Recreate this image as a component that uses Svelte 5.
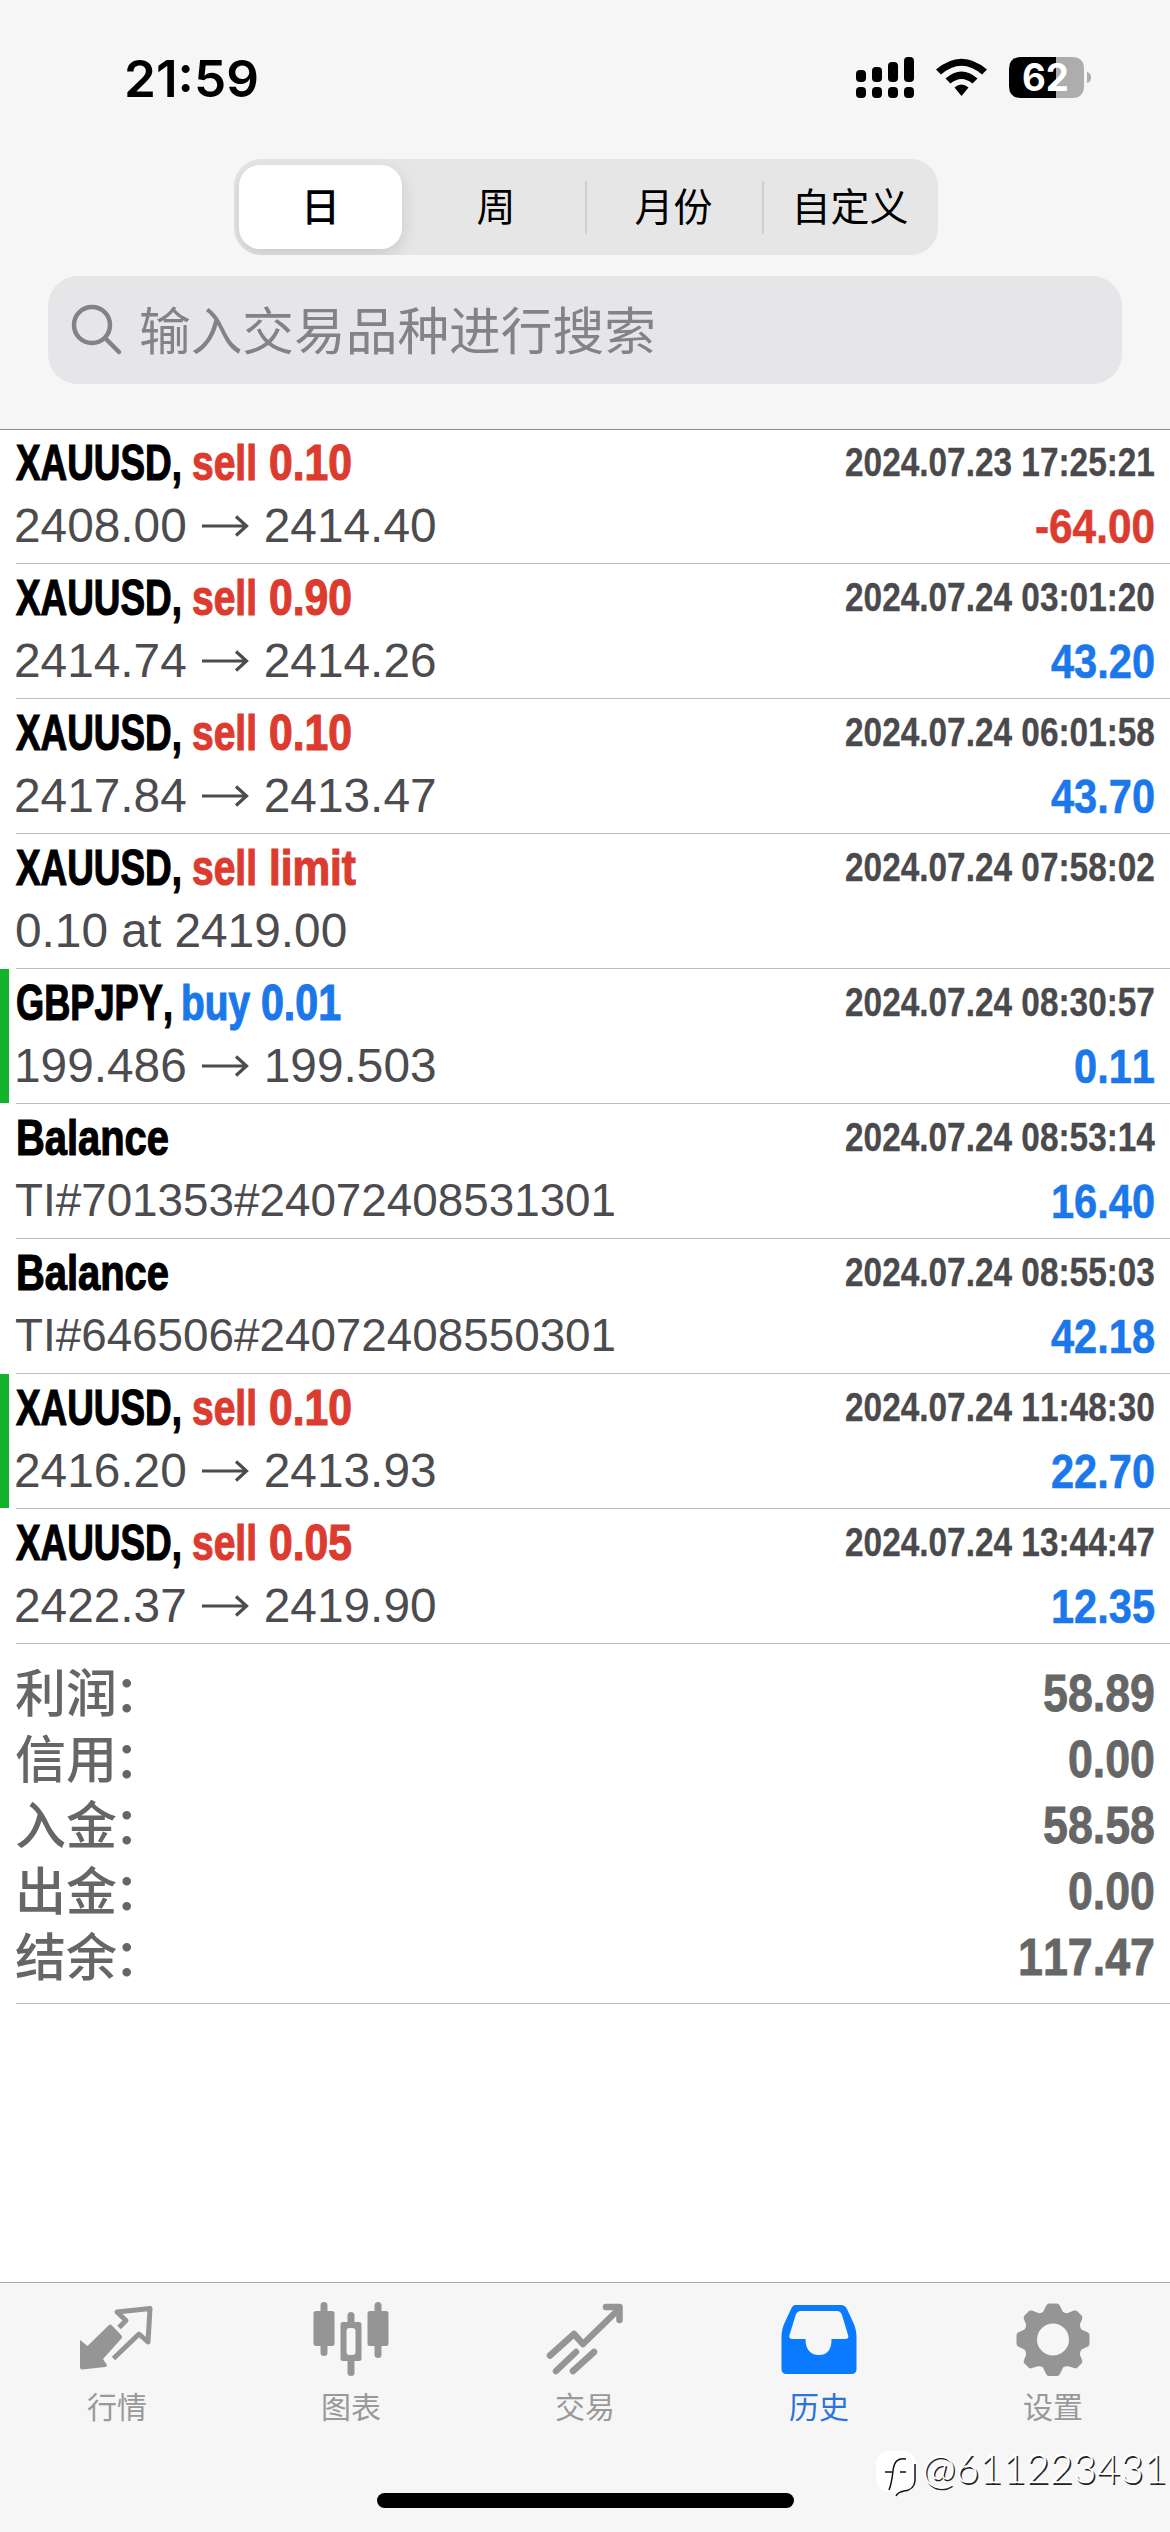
<script>
  const deals = [
    { sym: ['XAUUSD,', 166], side: ['sell', 65, 192], vol: ['0.10', 83, 269], kind: 'red', date: '2024.07.23 17:25:21', from: '2408.00', to: '2414.40', value: '-64.00', vw: 120 },
    { sym: ['XAUUSD,', 166], side: ['sell', 65, 192], vol: ['0.90', 83, 269], kind: 'red', date: '2024.07.24 03:01:20', from: '2414.74', to: '2414.26', value: '43.20', vw: 104 },
    { sym: ['XAUUSD,', 166], side: ['sell', 65, 192], vol: ['0.10', 83, 269], kind: 'red', date: '2024.07.24 06:01:58', from: '2417.84', to: '2413.47', value: '43.70', vw: 104 },
    { sym: ['XAUUSD,', 166], side: ['sell', 65, 192], vol: ['limit', 87, 269], kind: 'red', date: '2024.07.24 07:58:02', note: '0.10 at 2419.00' },
    { sym: ['GBPJPY,', 157], side: ['buy', 69, 181], vol: ['0.01', 80, 261], kind: 'blue', date: '2024.07.24 08:30:57', from: '199.486', to: '199.503', value: '0.11', vw: 81, mark: true },
    { sym: ['Balance', 153], date: '2024.07.24 08:53:14', note: 'TI#701353#24072408531301', value: '16.40', vw: 104 },
    { sym: ['Balance', 153], date: '2024.07.24 08:55:03', note: 'TI#646506#24072408550301', value: '42.18', vw: 104 },
    { sym: ['XAUUSD,', 166], side: ['sell', 65, 192], vol: ['0.10', 83, 269], kind: 'red', date: '2024.07.24 11:48:30', from: '2416.20', to: '2413.93', value: '22.70', vw: 104, mark: true },
    { sym: ['XAUUSD,', 166], side: ['sell', 65, 192], vol: ['0.05', 83, 269], kind: 'red', date: '2024.07.24 13:44:47', from: '2422.37', to: '2419.90', value: '12.35', vw: 104 },
  ];
  const totals = [
    ['利润', '58.89', 112],
    ['信用', '0.00', 87],
    ['入金', '58.58', 112],
    ['出金', '0.00', 87],
    ['结余', '117.47', 137],
  ];
  const periods = ['日', '周', '月份', '自定义'];
  const tabs = ['行情', '图表', '交易', '历史', '设置'];

  // Advance widths of the bold face, in em; anything not listed is a digit-wide glyph.
  const advance = {
    X: .667, A: .722, U: .722, S: .667, D: .722, G: .778, B: .722, P: .667, J: .556, Y: .667,
    l: .278, i: .278, m: .889, t: .333, b: .611, n: .611, u: .611,
    ',': .278, '.': .278, ' ': .278, ':': .333, '-': .333,
  };
  const natural = (text, size) => [...text].reduce((sum, c) => sum + (advance[c] ?? .556), 0) * size;
  // Condenses a run to the wanted width and places it on its baseline.
  const squeeze = (text, size, width, x, y) => `translate(${x} ${y}) scale(${(width / natural(text, size)).toFixed(4)} 1)`;
</script>

<div class="screen">
  <header>
    <div class="status">
      <svg class="clock" width="136" height="60"><text x="0" y="49" textLength="135" lengthAdjust="spacingAndGlyphs">21:59</text></svg>
      <svg class="sys" width="240" height="50" viewBox="0 0 240 50">
        <g>
          <rect x="0" y="15" width="10" height="12" rx="4" /><rect x="16" y="12" width="10" height="15" rx="4" />
          <rect x="32" y="7" width="10" height="20" rx="4" /><rect x="48" y="2" width="10" height="25" rx="4" />
          <rect x="0" y="32" width="10" height="11" rx="4" /><rect x="16" y="32" width="10" height="11" rx="4" />
          <rect x="32" y="32" width="10" height="11" rx="4" /><rect x="48" y="32" width="10" height="11" rx="4" />
        </g>
        <path d="M80 14.500Q105.500 -7 131 14.500L126 19.500Q105.500 2 85 19.500Z" />
        <path d="M89.500 23.500Q105.500 9.500 121.500 23.500L116.500 28.500Q105.500 19.500 94.500 28.500Z" />
        <path d="M98.500 32.500Q105.500 26.500 112.500 32.500L105.500 41Z" />
        <path d="M165 2H200V43H165Q153 43 153 31V14Q153 2 165 2Z" />
        <path class="pale" d="M200 2H216Q228 2 228 14V31Q228 43 216 43H200ZM231 17Q235 18 235 22.500Q235 27 231 28Z" />
        <text class="pct" x="166" y="36" textLength="47" lengthAdjust="spacingAndGlyphs">62</text>
      </svg>
    </div>
    <div class="segments">
      {#each periods as p, i}
        <div class="segment" class:on={i === 0} class:rule={i > 1}><span>{p}</span></div>
      {/each}
    </div>
    <div class="search">
      <svg width="52" height="52" viewBox="0 0 52 52"><circle cx="21" cy="21" r="18" /><path d="M34 34L48 48" /></svg>
      <span>输入交易品种进行搜索</span>
    </div>
  </header>

  <main>
    {#each deals as d}
      <section class="deal" class:mark={d.mark}>
        <div class="line top">
          <svg class="cond" width="420" height="60">
            <text transform={squeeze(d.sym[0], 50, d.sym[1], 0, 51)}>{d.sym[0]}</text>
            {#if d.side}
              <text class={d.kind} transform={squeeze(d.side[0], 50, d.side[1], d.side[2] - 16, 51)}>{d.side[0]}</text>
              <text class={d.kind} transform={squeeze(d.vol[0], 50, d.vol[1], d.vol[2] - 16, 51)}>{d.vol[0]}</text>
            {/if}
          </svg>
          <svg class="cond date" width="310" height="60"><text transform={squeeze(d.date, 40, 310, 0, 47)}>{d.date}</text></svg>
        </div>
        <div class="line bottom">
          {#if d.note}
            <span class="note" class:long={d.note.length > 20}>{d.note}</span>
          {:else}
            <span class="prices">
              <span>{d.from}</span>
              <svg width="47" height="24" viewBox="0 0 47 24"><path d="M0 12H44M34 2.500L44.500 12L34 21.500" /></svg>
              <span>{d.to}</span>
            </span>
          {/if}
          {#if d.value}
            <svg class="cond amount" width={d.vw} height="60">
              <text class={d.value[0] === '-' ? 'red' : 'blue'} transform={squeeze(d.value, 49, d.vw, 0, 42)}>{d.value}</text>
            </svg>
          {/if}
        </div>
      </section>
    {/each}
    <section class="totals">
      {#each totals as [label, value, w]}
        <div class="total">
          <span>{label}<i>：</i></span>
          <svg class="cond sum" width={w} height="60"><text transform={squeeze(value, 51, w, 0, 51)}>{value}</text></svg>
        </div>
      {/each}
    </section>
  </main>

  <nav>
    <div class="tabs">
      {#each tabs as t, i}
        <div class="tab" class:active={i === 3}>
          <svg width="78" height="78" viewBox="0 0 78 78">
            {#if i === 0}
              <path d="M2 37L9.500 43L31 22Q32.500 21 34 22.500L43 32Q45 34 43 36L25 56L29 62Q29 64 27 64L4 66.500Q2 66.500 2 64Z" />
              <path class="ln" d="M41 24.500L48 17.500L39 9L72 5.500L70 39L61 31L35.500 55.500" />
            {:else if i === 1}
              <rect x="1.500" y="8" width="21" height="35" rx="2.500" /><rect x="8.500" y="-1" width="7" height="54" rx="3.500" />
              <rect x="55.500" y="8" width="21" height="35" rx="2.500" /><rect x="62.500" y="-1" width="7" height="56" rx="3.500" />
              <rect x="28.500" y="19" width="21" height="39" rx="2.500" /><rect x="35.500" y="9" width="7" height="64" rx="3.500" />
              <rect class="hole" x="34.500" y="25" width="9" height="27" rx="3" />
            {:else if i === 2}
              <path class="ln w6" d="M4 52.500L28 31L37 41L73 6M60 4H73.500V17M10 68L30 49M27 68L48 49" />
            {:else if i === 3}
              <path fill-rule="evenodd" d="M15 2H61Q65 2 67 6L73 19Q76.500 26 76.500 34V66Q76.500 71 71.500 71H6.500Q1.500 71 1.500 66V34Q1.500 26 5 19L11 6Q13 2 15 2ZM21 8Q17.500 8 16 11L9.500 32Q8.500 36 12.500 36H25.500C25.500 46 30 52 39 52C48 52 51.500 46 51.500 36H65Q69.500 36 68 32L62 12Q60.500 8 57 8Z" />
            {:else}
              <path class="gear" fill-rule="evenodd" d="M35 0.500H43Q45 0.500 46 3L49 9Q52 11 55 9.500L60 7.500Q62 7 63.500 8.500L67.500 12.500Q69 14 68 16.500L66 21Q65.500 24 67.500 26.500L74 29.500Q75.500 30.500 75.500 32.500V40.500Q75.500 42.500 74 43.500L67.500 46.500Q65.500 49 66 52L68 57Q69 59 67.500 60.500L63.500 64.500Q62 66 60 65L55 63.500Q52 62.500 49 64.500L46 71Q45 73 43 73H35Q33 73 32 71L29 64.500Q26 62.500 23 63.500L18 65Q16 66 14.500 64.500L10.500 60.500Q9 59 10 57L12 52Q12.500 49 10.500 46.500L4 43.500Q2.500 42.500 2.500 40.500V32.500Q2.500 30.500 4 29.500L10.500 26.500Q12.500 24 12 21L10 16.500Q9 14 10.500 12.500L14.500 8.500Q16 7 18 7.500L23 9.500Q26 11 29 9L32 3Q33 0.500 35 0.500ZM39 20.500A16 16 0 1 0 39 52.500A16 16 0 1 0 39 20.500Z" />
            {/if}
          </svg>
          <span>{t}</span>
        </div>
      {/each}
    </div>
    <div class="home"></div>
    <div class="credit">
      <svg width="44" height="52" viewBox="0 0 44 52">
        <rect x="0" y="2" width="40" height="41" rx="13" fill="#fff" />
        <path d="M30 10C22 9 18 12 17 22C16 31 15 36 13 41M9 23H16M24 23H30M39 15V32Q38 41 28 42Q22 43 20 47" fill="none" stroke="#111" stroke-width="1.500" />
      </svg>
      <span>@611223431</span>
    </div>
  </nav>
</div>

<style>
  :global(body) { background: #fff; }
  .screen {
    width: 1170px; height: 2532px; display: flex; flex-direction: column; overflow: hidden;
    background: #fff; font-family: 'Liberation Sans', 'Noto Sans CJK SC', sans-serif;
  }
  svg { display: block; flex: none; overflow: visible; }
  header { box-sizing: border-box; height: 430px; background: #f6f6f6; border-bottom: 1px solid #8f8f8f; flex: none; }
  .status { display: flex; justify-content: space-between; height: 159px; padding: 48px 74px 0 124px; box-sizing: border-box; }
  .clock text { font: 600 51px Inter, sans-serif; }
  .sys { margin-top: 7px; }
  .pale { fill: #adadad; }
  .pct { fill: #fff; font: 700 38px Inter, sans-serif; }
  .segments {
    box-sizing: border-box; display: grid; grid-template-columns: 173px 178px 177px 176px;
    width: 704px; height: 96px; margin-left: 234px; border-radius: 27px; background: #e6e6e6;
    overflow: hidden;
  }
  .segment {
    position: relative; display: flex; align-items: center; justify-content: center;
    padding-bottom: 5px; font: 400 39px/1 'Noto Sans CJK SC', sans-serif; color: #000;
  }
  .segment.on { margin: 6px 5px 6px; border-radius: 21px; background: #fff; box-shadow: 0 6px 18px rgba(0, 0, 0, .13); font-weight: 500; }
  .segment.rule::before { content: ''; position: absolute; left: 0; top: 22px; height: 53px; width: 2px; background: #cfcfcf; }
  .search {
    display: flex; align-items: center; gap: 16px; box-sizing: border-box; height: 108px;
    margin: 21px 48px 0; padding-left: 23px; border-radius: 30px; background: #e6e6e8;
    color: #838386; font: 400 51.7px/1 'Noto Sans CJK SC', sans-serif;
  }
  .search span { padding-bottom: 5px; }
  .search svg { fill: none; stroke: #838386; stroke-width: 4.5; stroke-linecap: round; }
  main { flex: 1; min-height: 0; }
  .deal { position: relative; height: 135px; }
  .deal:first-child { margin-top: -1px; }
  .deal::after { content: ''; position: absolute; left: 16px; right: 0; bottom: 0; height: 1px; background: #bdbdbf; }
  .mark::before { content: ''; position: absolute; left: 0; top: 0; width: 9px; height: 134px; background: #12b32b; }
  .line { display: flex; justify-content: space-between; padding: 0 15px 0 16px; }
  .top { height: 72px; }
  .cond text {
    font: 700 50px 'Liberation Sans', sans-serif; font-kerning: none;
    stroke: currentColor; stroke-width: 1.2px; fill: currentColor;
  }
  .cond .red { color: #dc3c2f; }
  .cond .blue { color: #1b78ea; }
  .date { color: #4a4a4c; }
  .cond.date text { font-size: 40px; stroke-width: .3px; }
  .cond.amount text { font-size: 49px; stroke-width: .6px; }
  .cond.sum text { font-size: 51px; stroke-width: .8px; }
  .note, .prices { color: #4c4c4f; font-size: 47.8px; line-height: 56px; height: 56px; margin-top: -3px; white-space: nowrap; }
  .note.long { font-size: 45.8px; }
  .note { margin-left: -1px; }
  .prices { display: flex; align-items: center; gap: 15px; margin-left: -2px; }
  .prices svg { fill: none; stroke: #4c4c4f; stroke-width: 3.2; }
  .totals { position: relative; box-sizing: border-box; height: 360px; padding: 16px 15px 0 15px; color: #666; }
  .totals::after { content: ''; position: absolute; left: 16px; right: 0; bottom: 0; height: 1px; background: #bdbdbf; }
  .total { display: flex; justify-content: space-between; height: 66px; }
  .total span { margin-top: -3px; font: 500 51px/66px 'Noto Sans CJK SC', sans-serif; }
  .total i { font-style: normal; margin-left: -3px; }
  nav { position: relative; box-sizing: border-box; height: 250px; flex: none; background: #f6f6f6; border-top: 1px solid #a9a9ab; }
  .tabs { display: grid; grid-template-columns: repeat(5, 1fr); padding-top: 20px; }
  .tab { display: flex; flex-direction: column; align-items: center; color: #999; font: 400 30px/40px 'Noto Sans CJK SC', sans-serif; }
  .tab svg { fill: #959595; }
  .tab span { margin-top: 4px; }
  .tab.active { color: #2a74dc; }
  .tab.active svg { fill: #0a7aff; }
  .ln { fill: none; stroke: #959595; stroke-width: 5; stroke-linejoin: round; }
  .w6 { stroke-width: 6.5; stroke-linecap: round; }
  .tab .hole { fill: #f6f6f6; }
  .home { position: absolute; left: 377px; bottom: 24px; width: 417px; height: 15px; border-radius: 8px; background: #000; }
  .credit { position: absolute; left: 876px; top: 166px; display: flex; align-items: flex-start; }
  .credit span {
    margin: -4px 0 0 2px; font: 300 40.5px/46px Lato, sans-serif; color: #fff;
    text-shadow: 1.500px 1.500px 0 #222;
  }
</style>
